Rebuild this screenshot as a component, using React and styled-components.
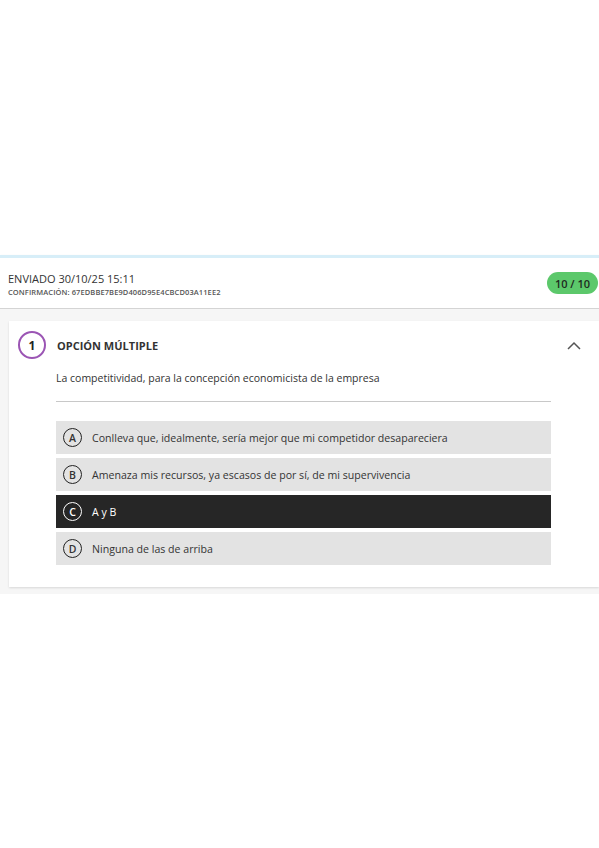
import React from "react";
import styled, { createGlobalStyle } from "styled-components";

const GlobalStyle = createGlobalStyle`
  body {
    margin: 0;
    background: #ffffff;
    font-family: "Open Sans", "Noto Sans", sans-serif;
    color: #333333;
  }
`;

const Page = styled.div`
  padding-top: 255px;
  width: 599px;
`;

const Header = styled.header`
  display: flex;
  align-items: center;
  justify-content: space-between;
  height: 50px;
  padding: 0 1px 0 8px;
  border-top: 3px solid #d7eef8;
  border-bottom: 1px solid #d4d4d4;
  box-shadow: 0 1px 2px rgba(0, 0, 0, 0.12);
  background: #ffffff;
`;

const Sent = styled.div`
  display: flex;
  flex-direction: column;
  gap: 1px;
  padding-top: 2px;
`;

const SentTitle = styled.div`
  font-size: 11px;
  color: #333333;
  line-height: 15px;
`;

const Confirmation = styled.div`
  font-size: 7.5px;
  font-weight: 600;
  color: #555555;
  line-height: 10px;
  letter-spacing: 0.1px;
`;

const Score = styled.div`
  background: #5cc86b;
  color: #1f2a1f;
  font-size: 11px;
  font-weight: 600;
  border-radius: 12px;
  width: 51px;
  height: 22px;
  display: flex;
  align-items: center;
  justify-content: center;
`;

const Content = styled.div`
  background: #f6f6f6;
  padding: 12px 0 7px 9px;
`;

const Card = styled.section`
  background: #ffffff;
  box-shadow: 0 1px 2px rgba(0, 0, 0, 0.12);
  padding: 10px 18px 22px 9px;
`;

const CardHead = styled.div`
  display: flex;
  align-items: center;
  gap: 11px;
`;

const Number = styled.div`
  width: 24px;
  height: 24px;
  border: 2px solid #9b55b4;
  border-radius: 50%;
  display: flex;
  align-items: center;
  justify-content: center;
  font-size: 12px;
  font-weight: 700;
  color: #222222;
`;

const Kind = styled.div`
  flex: 1;
  font-size: 11px;
  font-weight: 700;
  color: #333333;
`;

const Body = styled.div`
  padding-left: 38px;
  padding-right: 30px;
`;

const Question = styled.p`
  margin: 11px 0 0;
  font-size: 10.5px;
  line-height: 16px;
  color: #333333;
  padding-bottom: 15px;
  border-bottom: 1px solid #c8c8c8;
`;

const Options = styled.div`
  display: flex;
  flex-direction: column;
  gap: 4px;
  margin-top: 19px;
`;

const Option = styled.div`
  display: flex;
  align-items: center;
  gap: 10px;
  height: 33px;
  padding-left: 7px;
  background: ${(p) => (p.$selected ? "#262626" : "#e3e3e3")};
  color: ${(p) => (p.$selected ? "#ffffff" : "#333333")};
  font-size: 10.6px;
`;

const Letter = styled.span`
  width: 17px;
  height: 17px;
  border: 1.5px solid ${(p) => (p.$selected ? "#ffffff" : "#222222")};
  border-radius: 50%;
  display: flex;
  align-items: center;
  justify-content: center;
  font-size: 10.5px;
  font-weight: 600;
`;

const options = [
  { key: "A", text: "Conlleva que, idealmente, sería mejor que mi competidor desapareciera" },
  { key: "B", text: "Amenaza mis recursos, ya escasos de por sí, de mi supervivencia" },
  { key: "C", text: "A y B", selected: true },
  { key: "D", text: "Ninguna de las de arriba" },
];

function App() {
  return (
    <Page>
      <GlobalStyle />
      <Header>
        <Sent>
          <SentTitle>ENVIADO 30/10/25 15:11</SentTitle>
          <Confirmation>CONFIRMACIÓN: 67EDBBE7BE9D406D95E4CBCD03A11EE2</Confirmation>
        </Sent>
        <Score>10 / 10</Score>
      </Header>
      <Content>
        <Card>
          <CardHead>
            <Number>1</Number>
            <Kind>OPCIÓN MÚLTIPLE</Kind>
            <svg width="14" height="9" viewBox="0 0 14 9">
              <path d="M1 8 L7 2 L13 8" fill="none" stroke="#555" strokeWidth="1.5" />
            </svg>
          </CardHead>
          <Body>
            <Question>La competitividad, para la concepción economicista de la empresa</Question>
            <Options>
              {options.map((o) => (
                <Option key={o.key} $selected={o.selected}>
                  <Letter $selected={o.selected}>{o.key}</Letter>
                  {o.text}
                </Option>
              ))}
            </Options>
          </Body>
        </Card>
      </Content>
    </Page>
  );
}

export default App;
